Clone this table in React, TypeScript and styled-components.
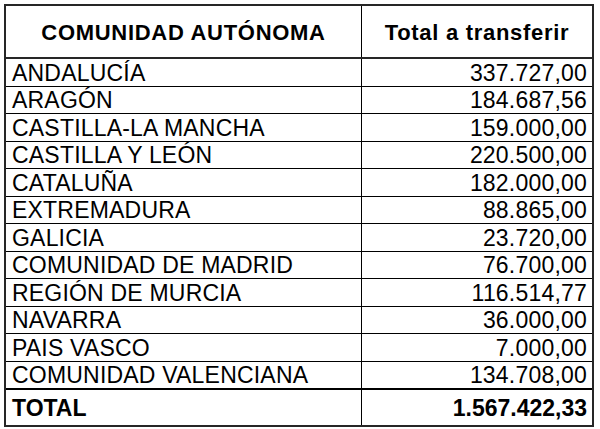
import styled, { createGlobalStyle } from 'styled-components'

const GlobalStyle = createGlobalStyle`
  html, body {
    margin: 0;
    padding: 0;
    background: #ffffff;
  }

  body {
    font-family: 'Liberation Sans', Arial, sans-serif;
    color: #000000;
  }
`

type Row = {
  name: string
  amount: string
}

const rows: Row[] = [
  { name: 'ANDALUCÍA', amount: '337.727,00' },
  { name: 'ARAGÓN', amount: '184.687,56' },
  { name: 'CASTILLA-LA MANCHA', amount: '159.000,00' },
  { name: 'CASTILLA Y LEÓN', amount: '220.500,00' },
  { name: 'CATALUÑA', amount: '182.000,00' },
  { name: 'EXTREMADURA', amount: '88.865,00' },
  { name: 'GALICIA', amount: '23.720,00' },
  { name: 'COMUNIDAD DE MADRID', amount: '76.700,00' },
  { name: 'REGIÓN DE MURCIA', amount: '116.514,77' },
  { name: 'NAVARRA', amount: '36.000,00' },
  { name: 'PAIS VASCO', amount: '7.000,00' },
  { name: 'COMUNIDAD VALENCIANA', amount: '134.708,00' },
]

const Page = styled.div`
  padding: 4px 0 0 4px;
`

const Frame = styled.div`
  box-sizing: border-box;
  width: 590px;
  border: 2px solid #262626;
`

const HeaderRow = styled.div`
  box-sizing: border-box;
  display: grid;
  grid-template-columns: 356px 1fr;
  height: 53px;
  border-bottom: 2px solid #262626;
`

const BodyRow = styled.div`
  box-sizing: border-box;
  display: grid;
  grid-template-columns: 356px 1fr;
  height: 27.5px;
  border-bottom: 1px solid #000000;
`

const TotalRow = styled.div`
  box-sizing: border-box;
  display: grid;
  grid-template-columns: 356px 1fr;
  height: 36px;
  border-top: 1px solid #000000;
`

const HeadCell = styled.div<{ $divider?: boolean }>`
  box-sizing: border-box;
  display: flex;
  align-items: center;
  justify-content: center;
  padding-top: 3px;
  font-size: 22px;
  font-weight: 700;
  letter-spacing: 0.7px;
  line-height: 1;
  white-space: nowrap;
  border-right: ${({ $divider }) => ($divider ? '1px solid #000000' : 'none')};
`

const Cell = styled.div<{ $right?: boolean; $bold?: boolean; $divider?: boolean }>`
  box-sizing: border-box;
  display: flex;
  align-items: center;
  justify-content: ${({ $right }) => ($right ? 'flex-end' : 'flex-start')};
  padding: 2px ${({ $right }) => ($right ? '5px' : '0')} 0
    ${({ $right }) => ($right ? '0' : '6px')};
  font-size: 23px;
  font-weight: ${({ $bold }) => ($bold ? 700 : 400)};
  letter-spacing: ${({ $bold }) => ($bold ? '0' : '0.2px')};
  line-height: 1;
  white-space: nowrap;
  border-right: ${({ $divider }) => ($divider ? '1px solid #000000' : 'none')};
`

export default function App() {
  return (
    <Page>
      <GlobalStyle />
      <Frame>
        <HeaderRow>
          <HeadCell $divider>COMUNIDAD AUTÓNOMA</HeadCell>
          <HeadCell>Total a transferir</HeadCell>
        </HeaderRow>
        {rows.map((row) => (
          <BodyRow key={row.name}>
            <Cell $divider>{row.name}</Cell>
            <Cell $right>{row.amount}</Cell>
          </BodyRow>
        ))}
        <TotalRow>
          <Cell $divider $bold>
            TOTAL
          </Cell>
          <Cell $right $bold>
            1.567.422,33
          </Cell>
        </TotalRow>
      </Frame>
    </Page>
  )
}
